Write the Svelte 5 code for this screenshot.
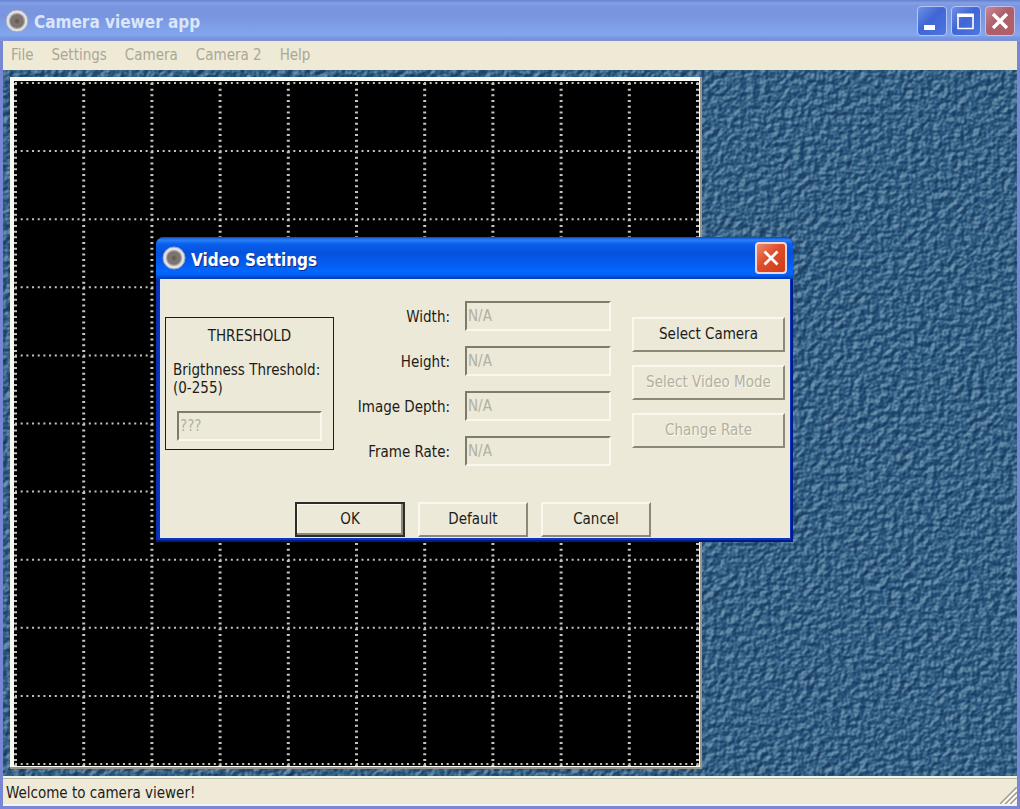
<script>
  const menus = ['File', 'Settings', 'Camera', 'Camera 2', 'Help'];
  const fields = [
    { id: 'width', label: 'Width:' },
    { id: 'height', label: 'Height:' },
    { id: 'depth', label: 'Image Depth:' },
    { id: 'rate', label: 'Frame Rate:' }
  ];
  const lines = Array.from({ length: 11 }, (_, i) => i);
  const lineX = (i) => 5.5 + i * 68.2;
  const lineY = (i) => 6 + i * 68.1;
</script>

{#snippet lens()}
  <svg class="lens" viewBox="0 0 24 24" aria-hidden="true">
    <defs>
      <radialGradient id="glass">
        <stop offset="0" stop-color="#5c5249" />
        <stop offset="0.5" stop-color="#80756e" />
        <stop offset="1" stop-color="#77716f" />
      </radialGradient>
    </defs>
    <circle cx="12" cy="12" r="11" fill="#dfe1e6" stroke="#9da5b8" stroke-width="1" />
    <circle cx="12" cy="12" r="8" fill="#a5a19e" />
    <circle cx="12" cy="12" r="6.8" fill="url(#glass)" />
  </svg>
{/snippet}

<div class="window">
  <header class="titlebar">
    {@render lens()}
    <h1>Camera viewer app</h1>
    <div class="controls">
      <button class="ctl" aria-label="Minimize">
        <svg viewBox="0 0 28 28"><rect x="6" y="18" width="11" height="5" fill="#fff" /></svg>
      </button>
      <button class="ctl" aria-label="Maximize">
        <svg viewBox="0 0 28 28"><path d="M6 8.5H21V21.5H6Z" fill="none" stroke="#fff" stroke-width="1.6" /><path d="M5.2 6.5H21.8V10H5.2Z" fill="#fff" /></svg>
      </button>
      <button class="ctl close" aria-label="Close">
        <svg viewBox="0 0 28 28"><path d="M7 7L21 21M21 7L7 21" stroke="#fff" stroke-width="3.4" /></svg>
      </button>
    </div>
  </header>

  <nav class="menubar">
    {#each menus as m}<button disabled>{m}</button>{/each}
  </nav>

  <main class="workspace">
    <svg class="texture" aria-hidden="true">
      <filter id="emboss" x="0" y="0" width="100%" height="100%" color-interpolation-filters="sRGB">
        <feTurbulence type="fractalNoise" baseFrequency="0.15 0.16" numOctaves="2" seed="21" result="n" />
        <feDiffuseLighting in="n" surfaceScale="2" diffuseConstant="1" lighting-color="#ffffff" result="l">
          <feDistantLight azimuth="225" elevation="40" />
        </feDiffuseLighting>
        <feComponentTransfer>
          <feFuncR type="table" tableValues="0.09 0.10 0.12 0.15 0.22 0.37 0.48" />
          <feFuncG type="table" tableValues="0.20 0.22 0.26 0.31 0.40 0.52 0.61" />
          <feFuncB type="table" tableValues="0.32 0.36 0.41 0.46 0.54 0.63 0.69" />
        </feComponentTransfer>
      </filter>
      <rect width="100%" height="100%" filter="url(#emboss)" />
    </svg>

    <svg class="viewer" viewBox="0 0 692 692" role="img" aria-label="Camera view">
      <rect width="692" height="692" fill="#9c958a" />
      <rect width="690" height="690" fill="#f7fbf4" />
      <rect x="4" y="4" width="685" height="685" fill="#000" />
      {#each lines as i}
        <line x1="5" x2="689" y1={lineY(i)} y2={lineY(i)} class="dots" stroke-width="2" />
        <line y1="6" y2="689" x1={lineX(i)} x2={lineX(i)} class="dots" stroke-width="3" />
      {/each}
    </svg>
  </main>

  <footer class="status">
    <span>Welcome to camera viewer!</span>
    <svg viewBox="0 0 18 18" aria-hidden="true">
      <path d="M2 18L18 2M8 18L18 8M13 18L18 13" stroke="#fff" stroke-width="2" />
      <path d="M0 18L18 0M5.5 18L18 5.5M11 18L18 11" stroke="#9f9b8c" stroke-width="1.6" />
    </svg>
  </footer>

  <div class="dialog" role="dialog" aria-labelledby="dlg-title">
    <header class="dlg-title">
      {@render lens()}
      <h2 id="dlg-title">Video Settings</h2>
      <button class="ctl red" aria-label="Close dialog">
        <svg viewBox="0 0 28 28"><path d="M7 7L21 21M21 7L7 21" stroke="#fff" stroke-width="3" /></svg>
      </button>
    </header>
    <form class="dlg-body">
      <div class="columns">
        <section class="threshold">
          <h3>THRESHOLD</h3>
          <label for="threshold">Brigthness Threshold:<br />(0-255)</label>
          <input id="threshold" value="???" disabled />
        </section>
        <div class="fields">
          {#each fields as f}
            <label for={f.id}>{f.label}</label>
            <input id={f.id} value="N/A" disabled />
          {/each}
        </div>
        <div class="side">
          <button type="button" class="btn">Select Camera</button>
          <button type="button" class="btn" disabled>Select Video Mode</button>
          <button type="button" class="btn" disabled>Change Rate</button>
        </div>
      </div>
      <div class="actions">
        <button type="button" class="btn primary">OK</button>
        <button type="button" class="btn">Default</button>
        <button type="button" class="btn">Cancel</button>
      </div>
    </form>
  </div>
</div>

<style>
  :global(body) { margin: 0; }
  * { box-sizing: border-box; }
  button, input { font: inherit; margin: 0; }
  h1, h2, h3 { margin: 0; }

  .window {
    position: relative;
    display: flex;
    flex-direction: column;
    min-height: 100vh;
    padding: 0 3px 3px;
    background: #7887d4;
    font: 15px/18px "DejaVu Sans Condensed", "Noto Sans", sans-serif;
    color: #1c1c1a;
  }
  .titlebar {
    display: flex;
    align-items: center;
    height: 41px;
    flex: none;
    margin: 0 -3px;
    padding: 0 5px;
    gap: 5px;
    background: linear-gradient(#6580cc 0, #84a0e8 3px, #7b96e0 6px, #7a95df 16px, #7fa0e9 28px, #82a7ef 35px, #768fdc 39px, #8794ce 41px);
  }
  .lens { width: 24px; height: 24px; flex: none; }
  h1, h2 { flex: 1; font: bold 17px/24px "DejaVu Sans Condensed", "Noto Sans", sans-serif; }
  h1 { color: #dbe6fb; padding-top: 2px; }
  .controls { display: flex; gap: 4px; }
  .ctl {
    width: 30px;
    height: 30px;
    padding: 0;
    border: 1px solid #b5c5f5;
    border-radius: 4px;
    background: linear-gradient(135deg, #6f90e6, #3f66d4 45%, #4c76e2);
  }
  .ctl svg { display: block; width: 28px; height: 28px; }
  .close { background: linear-gradient(135deg, #c58896, #ad5f6a 45%, #b06068); border-color: #cdbbe0; }
  .red { background: linear-gradient(135deg, #ec8a6c, #df4c29 45%, #cf3c17); border: 2px solid #efd5dc; }
  .red svg { width: 26px; height: 26px; }

  .menubar {
    display: flex;
    height: 29px;
    flex: none;
    padding: 0 8px;
    gap: 18px;
    background: #efead6;
  }
  .menubar button { padding: 0 0 2px; border: 0; background: none; color: #aaa797; }

  .workspace {
    position: relative;
    display: flex;
    flex: 1;
    min-height: 0;
    padding: 7px;
    overflow: hidden;
    background: #31618a;
  }
  .texture { position: absolute; inset: 0; width: 100%; height: 100%; }
  .viewer { position: relative; display: block; height: calc(100vh - 117px); aspect-ratio: 1; }
  .dots { stroke: #c4c4be; stroke-dasharray: 2 3.68; }

  .status {
    display: flex;
    align-items: center;
    justify-content: space-between;
    height: 30px;
    flex: none;
    padding-left: 3px;
    border-top: 2px solid #eef3ee;
    border-bottom: 2px solid #f3f3f6;
    box-shadow: inset 0 1px #b8b8a6;
    background: #efead8;
  }
  .status span { padding-top: 4px; }
  .status svg { width: 17px; height: 17px; align-self: flex-end; }

  .dialog {
    position: absolute;
    left: 156px;
    top: 237px;
    width: 637px;
    padding: 0 3px 4px 4px;
    border-radius: 8px 8px 0 0;
    background: #0a35c0;
    box-shadow: inset -2px -2px #001a8c, inset 2px 0 #0831a8;
  }
  .dlg-title {
    display: flex;
    align-items: center;
    gap: 5px;
    height: 42px;
    margin: 0 -3px 0 -4px;
    padding: 0 6px;
    border-radius: 8px 8px 0 0;
    background: linear-gradient(#0748c8 0, #2c82f8 3px, #0a5fec 7px, #0452dc 16px, #0459ec 24px, #0367ff 34px, #0260f4 38px, #0038b4 42px);
  }
  h2 { color: #fff; padding-top: 3px; text-shadow: 1px 1px #0a2f8c; }
  .dlg-title .ctl { width: 32px; height: 32px; padding: 0; display: grid; place-items: center; }
  .dlg-body {
    padding: 22px 5px 1px;
    background: #ece9d8;
    box-shadow: inset 0 0 0 1px #e4ebf6;
  }
  .columns { display: flex; gap: 21px; align-items: flex-start; }
  .threshold {
    flex: none;
    width: 169px;
    margin-top: 16px;
    padding: 9px 7px 8px;
    border: 1px solid #1c1c1a;
    display: flex;
    flex-direction: column;
  }
  .threshold h3 { font: inherit; text-align: center; margin-bottom: 16px; }
  .threshold label { white-space: nowrap; margin-bottom: 14px; }
  .threshold input { margin: 0 4px; }
  input {
    height: 30px;
    min-width: 0;
    padding: 0 1px;
    border: 2px solid;
    border-color: #7e7b6d #faf8ee #faf8ee #7e7b6d;
    border-radius: 0;
    background: #ece9d8;
    color: #b3b0a1;
  }
  .fields {
    flex: 1;
    display: grid;
    grid-template-columns: 1fr 146px;
    gap: 15px;
    align-items: center;
    text-align: right;
    white-space: nowrap;
  }
  .fields label { padding-top: 2px; }
  .side { flex: none; width: 153px; margin-top: 16px; display: flex; flex-direction: column; gap: 13px; }
  .btn {
    height: 35px;
    padding: 0 0 1px;
    border: 2px solid;
    border-color: #faf8ee #8b887a #8b887a #faf8ee;
    background: #ece9d8;
    color: #1c1c1a;
    white-space: nowrap;
  }
  .btn:disabled { color: #b3b0a1; text-shadow: 1px 1px #faf8ee; }
  .actions { display: flex; justify-content: center; gap: 13px; margin-top: 36px; padding-right: 4px; }
  .actions .btn { width: 110px; }
  .primary { border-color: #2c2c28; box-shadow: inset -2px -2px #8b887a, inset 1px 1px #faf8ee; }
</style>
